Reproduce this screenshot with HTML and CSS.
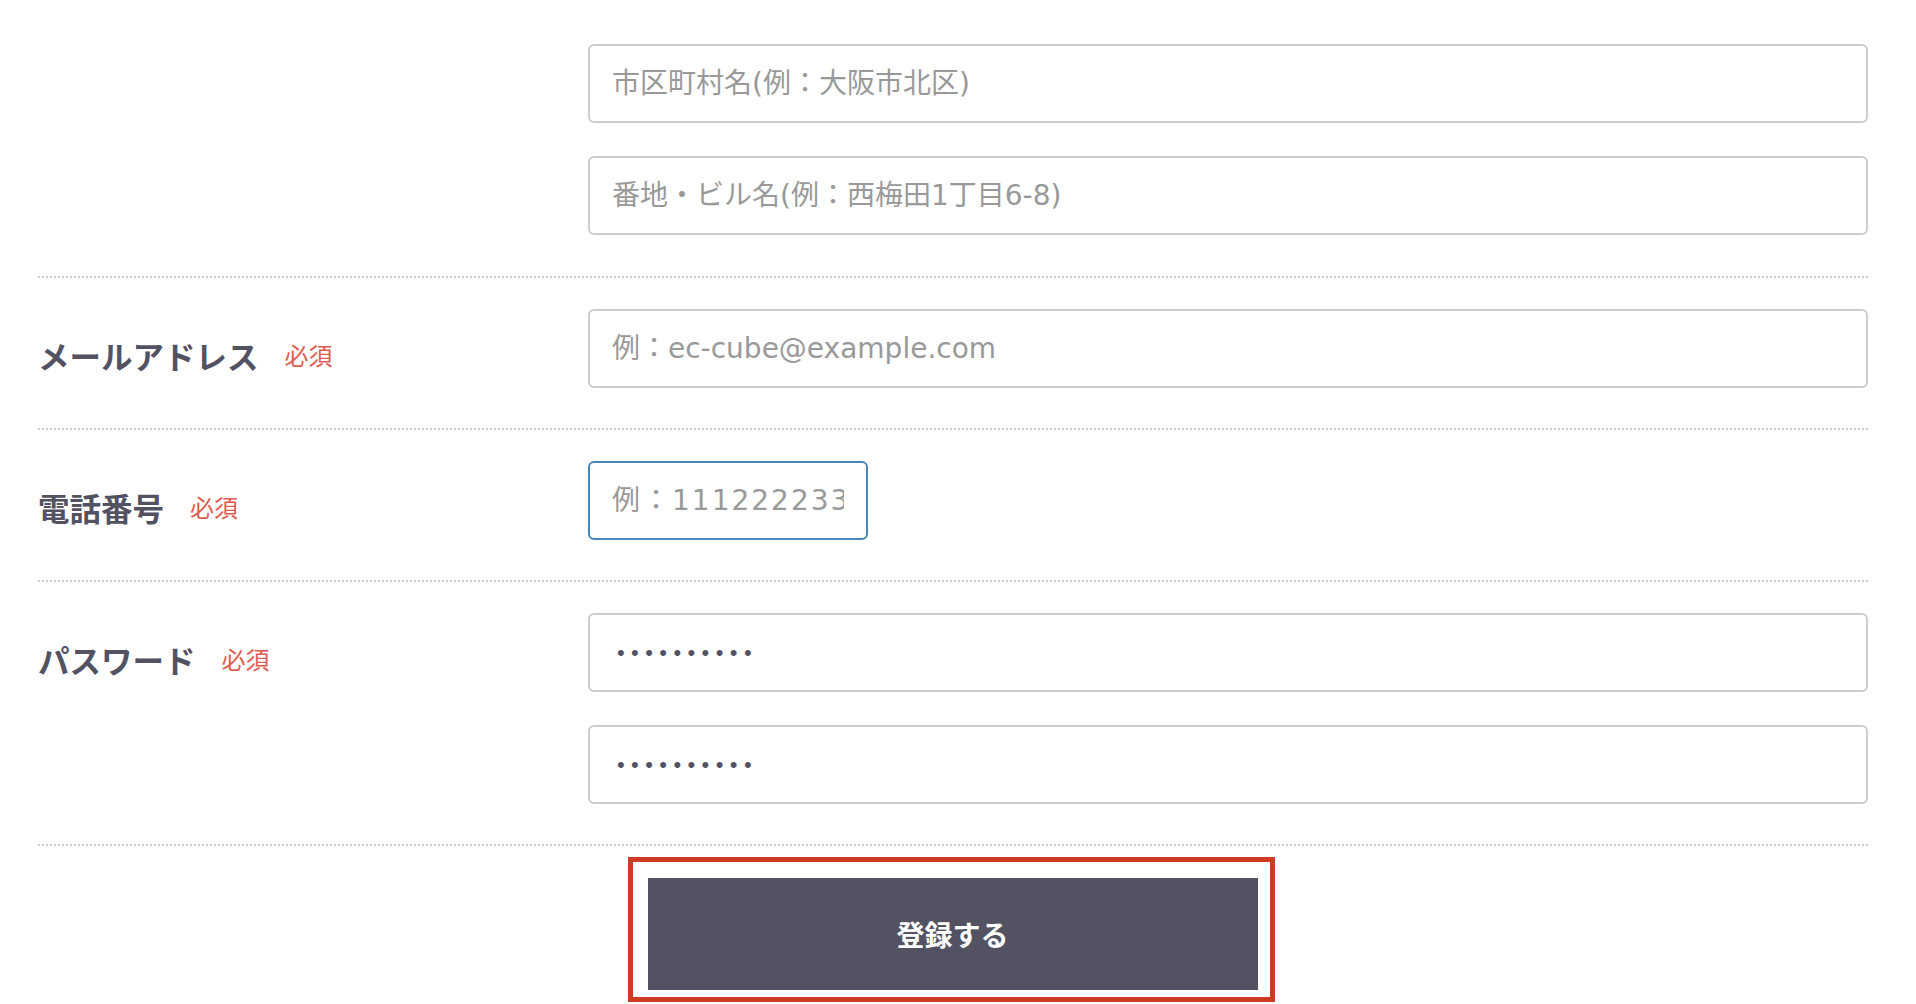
FILE: index.html
```html
<!DOCTYPE html>
<html lang="ja">
<head>
<meta charset="utf-8">
<title>会員登録</title>
<link rel="stylesheet" href="styles.css">
</head>
<body>
<form class="form" onsubmit="return false;">
  <div class="row row--first">
    <div class="row__label"></div>
    <div class="row__field">
      <input class="input" type="text" placeholder="市区町村名(例：大阪市北区)">
      <input class="input" type="text" placeholder="番地・ビル名(例：西梅田1丁目6-8)">
    </div>
  </div>
  <div class="row">
    <div class="row__label"><span class="label-text">メールアドレス</span><span class="required">必須</span></div>
    <div class="row__field">
      <input class="input" type="email" placeholder="例：ec-cube@example.com">
    </div>
  </div>
  <div class="row">
    <div class="row__label"><span class="label-text">電話番号</span><span class="required">必須</span></div>
    <div class="row__field">
      <input class="input input--tel is-focus" type="tel" placeholder="例：11122223333">
    </div>
  </div>
  <div class="row">
    <div class="row__label"><span class="label-text">パスワード</span><span class="required">必須</span></div>
    <div class="row__field">
      <input class="input input--password" type="password" value="password12">
      <input class="input input--password" type="password" value="password12">
    </div>
  </div>
  <div class="actions">
    <div class="highlight">
      <button class="btn" type="submit">登録する</button>
    </div>
  </div>
</form>
</body>
</html>
```

FILE: styles.css
```css
html, body {
  margin: 0;
  padding: 0;
  background: #ffffff;
}

body {
  font-family: "Noto Sans CJK JP", sans-serif;
  color: #525263;
}

.form {
  margin: 0 48px 0 38px;
}

.row {
  display: flex;
  align-items: flex-start;
  padding: 31px 0 40px;
  border-bottom: 2px dotted #cccccc;
}

.row--first {
  padding-top: 44px;
  padding-bottom: 41px;
}

.row__label {
  flex: 0 0 550px;
  display: flex;
  align-items: center;
  height: 46px;
  padding-top: 23px;
}

.label-text {
  font-size: 31.5px;
  font-weight: 700;
  line-height: 46px;
  color: #525263;
}

.required {
  margin-left: 26px;
  font-size: 24px;
  line-height: 46px;
  color: #de5d50;
}

.row__field {
  flex: 1 1 auto;
  display: flex;
  flex-direction: column;
  gap: 33px;
}

.input {
  box-sizing: border-box;
  display: block;
  width: 100%;
  height: 79px;
  margin: 0;
  padding: 0 22px;
  border: 2px solid #cccccc;
  border-radius: 6px;
  background: #ffffff;
  font-family: "DejaVu Sans", "Noto Sans CJK JP", sans-serif;
  font-size: 28px;
  color: #525263;
  outline: none;
}

.input::placeholder {
  color: #999999;
  opacity: 1;
}

.input--tel {
  width: 280px;
  letter-spacing: 2px;
}

.is-focus {
  border-color: #4a86b8;
}

.input--password {
  padding-left: 27px;
  font-family: "Liberation Sans", sans-serif;
  font-size: 22px;
  letter-spacing: 6.4px;
  color: #525263;
}

.actions {
  display: flex;
  justify-content: center;
  margin-top: 11px;
}

.highlight {
  border: 5px solid #cf3a24;
  padding: 16px 12px 7px 15px;
  margin-right: 4px;
}

.btn {
  display: block;
  width: 610px;
  height: 112px;
  margin: 0;
  padding: 0;
  border: none;
  border-radius: 0;
  background: #525263;
  color: #ffffff;
  font-family: "Noto Sans CJK JP", sans-serif;
  font-size: 28px;
  font-weight: 700;
  cursor: pointer;
}
```
